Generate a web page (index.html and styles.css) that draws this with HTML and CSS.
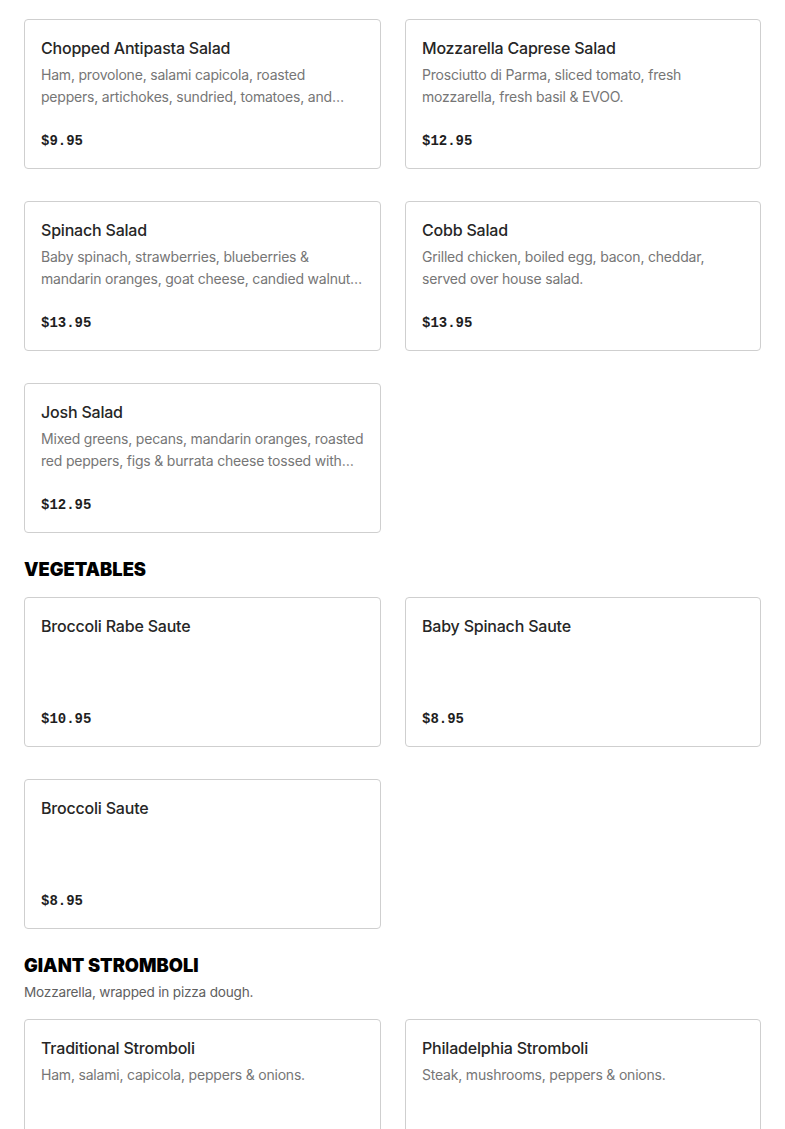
FILE: index.html
```html
<!DOCTYPE html>
<html>
<head>
<meta charset="utf-8">
<link rel="stylesheet" href="styles.css">
</head>
<body>
<main class="menu">
  <section class="section">
    <div class="grid">
      <div class="card"><div class="title">Chopped Antipasta Salad</div><div class="desc">Ham, provolone, salami capicola, roasted peppers, artichokes, sundried, tomatoes, and olives over romaine.</div><div class="price">$9.95</div></div>
      <div class="card"><div class="title">Mozzarella Caprese Salad</div><div class="desc">Prosciutto di Parma, sliced tomato, fresh mozzarella, fresh basil &amp; EVOO.</div><div class="price">$12.95</div></div>
      <div class="card"><div class="title">Spinach Salad</div><div class="desc">Baby spinach, strawberries, blueberries &amp; mandarin oranges, goat cheese, candied walnuts and raspberry vinaigrette.</div><div class="price">$13.95</div></div>
      <div class="card"><div class="title">Cobb Salad</div><div class="desc">Grilled chicken, boiled egg, bacon, cheddar, served over house salad.</div><div class="price">$13.95</div></div>
      <div class="card"><div class="title">Josh Salad</div><div class="desc">Mixed greens, pecans, mandarin oranges, roasted red peppers, figs &amp; burrata cheese tossed with balsamic vinaigrette.</div><div class="price">$12.95</div></div>
    </div>
  </section>
  <section class="section">
    <h2 class="heading">VEGETABLES</h2>
    <div class="grid">
      <div class="card"><div class="title">Broccoli Rabe Saute</div><div class="price">$10.95</div></div>
      <div class="card"><div class="title">Baby Spinach Saute</div><div class="price">$8.95</div></div>
      <div class="card"><div class="title">Broccoli Saute</div><div class="price">$8.95</div></div>
    </div>
  </section>
  <section class="section">
    <h2 class="heading">GIANT STROMBOLI</h2>
    <p class="section-desc">Mozzarella, wrapped in pizza dough.</p>
    <div class="grid">
      <div class="card"><div class="title">Traditional Stromboli</div><div class="desc">Ham, salami, capicola, peppers &amp; onions.</div><div class="price">$14.95</div></div>
      <div class="card"><div class="title">Philadelphia Stromboli</div><div class="desc">Steak, mushrooms, peppers &amp; onions.</div><div class="price">$14.95</div></div>
    </div>
  </section>
</main>
</body>
</html>
```

FILE: styles.css
```css
html, body {
  margin: 0;
  padding: 0;
  background: #fff;
}
body {
  font-family: "Inter", "Liberation Sans", sans-serif;
  color: #222;
}
.menu {
  padding: 19px 24px 40px 24px;
  display: flex;
  flex-direction: column;
  gap: 23px;
}
.heading {
  box-sizing: border-box;
  height: 24px;
  margin: 0;
  padding-top: 1px;
  font-family: "Inter", sans-serif;
  font-weight: 900;
  font-size: 18.3px;
  line-height: 24px;
  color: #000;
}
.section-desc {
  margin: 6px 0 0 0;
  font-size: 13.6px;
  line-height: 20px;
  letter-spacing: -0.2px;
  color: #606060;
}
.heading + .grid {
  margin-top: 17px;
}
.section-desc + .grid {
  margin-top: 17px;
}
.grid {
  display: grid;
  grid-template-columns: 357px 356px;
  column-gap: 24px;
  row-gap: 32px;
}
.card {
  box-sizing: border-box;
  height: 150px;
  border: 1px solid #cfcfcf;
  border-radius: 4px;
  padding: 16px 16px 15px 16px;
  display: flex;
  flex-direction: column;
}
.title {
  font-size: 16px;
  font-weight: 500;
  line-height: 24px;
  letter-spacing: -0.2px;
  color: #262626;
}
.desc {
  margin-top: 4px;
  font-size: 14px;
  line-height: 22px;
  letter-spacing: -0.2px;
  color: #767676;
  display: -webkit-box;
  -webkit-line-clamp: 2;
  -webkit-box-orient: vertical;
  overflow: hidden;
}
.price {
  margin-top: auto;
  font-family: "Liberation Mono", "DejaVu Sans Mono", monospace;
  font-weight: 700;
  font-size: 14px;
  line-height: 24px;
  color: #1e1e1e;
}
```
